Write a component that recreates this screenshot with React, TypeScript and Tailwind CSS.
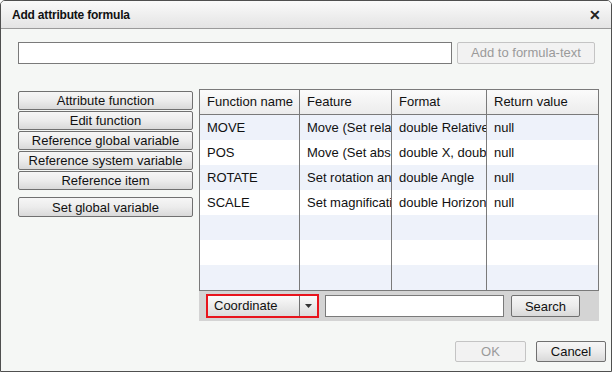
const rows = [
  { name: "MOVE", feature: "Move (Set relative position)", format: "double Relative X", ret: "null" },
  { name: "POS", feature: "Move (Set absolute position)", format: "double X, double Y", ret: "null" },
  { name: "ROTATE", feature: "Set rotation angle", format: "double Angle", ret: "null" },
  { name: "SCALE", feature: "Set magnification", format: "double Horizontal", ret: "null" },
  { name: "", feature: "", format: "", ret: "" },
  { name: "", feature: "", format: "", ret: "" },
  { name: "", feature: "", format: "", ret: "" },
];

const sideButtons = [
  "Attribute function",
  "Edit function",
  "Reference global variable",
  "Reference system variable",
  "Reference item",
];

const btn =
  "border border-[#707070] rounded-[2px] bg-gradient-to-b from-[#f6f6f6] via-[#ececec] to-[#d9d9d9] text-[13px] text-[#111] leading-none flex items-center justify-center";

export default function App() {
  return (
    <div className="w-[612px] h-[372px] bg-white font-['Liberation_Sans',sans-serif]">
      <div className="w-full h-full flex flex-col border border-[#4f4f4f] rounded-t-[5px] overflow-hidden bg-[#f5f7f5]">
        {/* title bar */}
        <div className="h-[28px] shrink-0 flex items-center justify-between pl-[11px] pr-[10px] bg-gradient-to-b from-[#fafafa] to-[#e4e4e4] border-b border-[#9a9a9a]">
          <span className="text-[12px] font-bold text-[#111] tracking-[-0.2px]">Add attribute formula</span>
          <span className="text-[14px] font-bold text-[#222] leading-none">✕</span>
        </div>

        {/* formula row */}
        <div className="flex gap-[5px] pl-[17px] pr-[16px] pt-[13px]">
          <div className="w-[434px] h-[22px] bg-white border border-[#7a7a7a]" />
          <div className="w-[138px] h-[22px] border border-[#c4c4c4] rounded-[2px] bg-[#f2f2f2] text-[13px] text-[#9a9a9a] flex items-center justify-center">
            Add to formula-text
          </div>
        </div>

        {/* main */}
        <div className="flex pl-[17px] pt-[25px] gap-[6px]">
          <div className="w-[175px] flex flex-col pt-[2px]">
            {sideButtons.map((b, i) => (
              <div
                key={b}
                className={`${btn} h-[19px] mb-[1px] ${
                  i === 0 ? "from-[#dcdcdc] via-[#c9c9c9] to-[#b5b5b5] border-[#6a6a6a]" : ""
                }`}
              >
                {b}
              </div>
            ))}
            <div className={`${btn} h-[20px] mt-[6px]`}>Set global variable</div>
          </div>

          <div className="w-[400px] flex flex-col">
            <div className="border border-[#7a7a7a] bg-white">
              <div className="grid grid-cols-[100px_92px_95px_1fr] h-[25px] bg-gradient-to-b from-[#fbfbfb] to-[#ececec] border-b border-[#7a7a7a] text-[13px] text-[#111]">
                {["Function name", "Feature", "Format", "Return value"].map((h, i) => (
                  <div
                    key={h}
                    className={`flex items-center pl-[7px] ${i < 3 ? "border-r border-[#7a7a7a]" : ""}`}
                  >
                    {h}
                  </div>
                ))}
              </div>
              {rows.map((r, i) => (
                <div
                  key={i}
                  className={`grid grid-cols-[100px_92px_95px_1fr] h-[25px] text-[13px] text-[#111] ${
                    i % 2 === 0 ? "bg-[#eef2fa]" : "bg-white"
                  }`}
                >
                  {[r.name, r.feature, r.format, r.ret].map((c, j) => (
                    <div
                      key={j}
                      className={`flex items-center pl-[7px] overflow-hidden whitespace-nowrap ${
                        j < 3 ? "border-r border-[#7a7a7a]" : ""
                      }`}
                    >
                      {c}
                    </div>
                  ))}
                </div>
              ))}
            </div>
            <div className="h-[30px] bg-[#d4d4d4] flex items-center pl-[7px] gap-[6px]">
              <div className="w-[113px] h-[24px] border-2 border-[#e8141c] flex bg-gradient-to-b from-[#fafafa] to-[#dcdcdc]">
                <div className="flex-1 flex items-center pl-[6px] text-[13px] text-[#111] border-r border-[#707070]">
                  Coordinate
                </div>
                <div className="w-[17px] flex items-center justify-center">
                  <svg width="8" height="5" viewBox="0 0 8 5">
                    <path d="M0 0h7L3.5 4z" fill="#333" />
                  </svg>
                </div>
              </div>
              <div className="w-[179px] h-[22px] bg-white border border-[#7a7a7a]" />
              <div className={`${btn} w-[69px] h-[22px] ml-[1px]`}>Search</div>
            </div>
          </div>
        </div>

        {/* footer */}
        <div className="flex justify-end gap-[10px] pr-[5px] mt-auto mb-[9px]">
          <div className="w-[71px] h-[21px] border border-[#c4c4c4] rounded-[2px] bg-[#f2f2f2] text-[13px] text-[#9a9a9a] flex items-center justify-center">
            OK
          </div>
          <div className={`${btn} w-[70px] h-[21px]`}>Cancel</div>
        </div>
      </div>
    </div>
  );
}
